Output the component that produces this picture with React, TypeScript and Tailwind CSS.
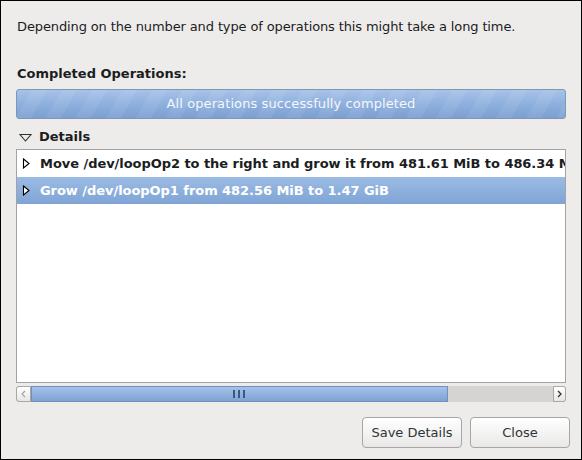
import React from 'react';

const rows = [
  { text: 'Move /dev/loopOp2 to the right and grow it from 481.61 MiB to 486.34 MiB', selected: false },
  { text: 'Grow /dev/loopOp1 from 482.56 MiB to 1.47 GiB', selected: true },
];

function Expander({ open }: { open?: boolean }) {
  if (open) {
    return (
      <svg width="13" height="9" viewBox="0 0 13 9" className="shrink-0">
        <path d="M1 1.5 H12 L6.5 8 Z" fill="none" stroke="#2e3436" strokeWidth="1.1" />
      </svg>
    );
  }
  return (
    <svg width="8" height="11" viewBox="0 0 8 11" className="shrink-0">
      <path d="M1.5 1 L7 5.5 L1.5 10 Z" fill="#ffffff" stroke="#000" strokeWidth="1.1" />
    </svg>
  );
}

export default function App() {
  return (
    <div className="w-[582px] h-[460px] bg-[#edeceb] border border-black flex flex-col text-[13px] text-[#1b1d1e] font-['DejaVu_Sans',sans-serif] overflow-hidden">
      {/* message */}
      <div className="h-[16px] mt-[18px] px-[16px] leading-[16px] tracking-[-0.12px]">
        Depending on the number and type of operations this might take a long time.
      </div>

      <div className="h-[16px] mt-[31px] px-[16px] leading-[16px] font-bold">Completed Operations:</div>

      {/* progress bar */}
      <div className="mx-[15px] mt-[7px] h-[30px] rounded-[3px] border border-[#7f97b7] bg-[repeating-linear-gradient(120deg,rgba(255,255,255,0)_0px,rgba(255,255,255,0)_13px,rgba(255,255,255,0.07)_13px,rgba(255,255,255,0.07)_26px),linear-gradient(to_bottom,#a6c3e8,#8eb0de_50%,#7b9fd1)] flex items-center justify-center text-[#f4f7fb] tracking-[0.1px]">
        All operations successfully completed
      </div>

      {/* details expander */}
      <div className="h-[16px] mt-[10px] px-[18px] flex items-center gap-[7px] font-bold leading-[16px]">
        <Expander open />
        <span>Details</span>
      </div>

      {/* list */}
      <div className="mx-[15px] mt-[4px] h-[234px] border border-[#a3a3a3] bg-white overflow-hidden">
        {rows.map((r) => (
          <div
            key={r.text}
            className={
              r.selected
                ? 'h-[27px] flex items-center gap-[10px] pl-[5px] font-bold whitespace-nowrap tracking-[-0.05px] text-white bg-[linear-gradient(to_bottom,#9bbbe4,#7fa4d5)]'
                : 'h-[27px] flex items-center gap-[10px] pl-[5px] font-bold whitespace-nowrap tracking-[-0.05px]'
            }
          >
            <Expander />
            <span>{r.text}</span>
          </div>
        ))}
      </div>

      {/* horizontal scrollbar */}
      <div className="mx-[15px] mt-[3px] h-[16px] flex rounded-[3px] bg-[#d5d4d2]">
        <div className="w-[15px] h-full rounded-l-[3px] border border-[#a8a8a8] bg-[linear-gradient(to_bottom,#ffffff,#e6e6e5)] flex items-center justify-center">
          <svg width="5" height="8" viewBox="0 0 5 8">
            <path d="M4 1 L1 4 L4 7" fill="none" stroke="#a5a5a5" strokeWidth="1.2" />
          </svg>
        </div>
        <div className="w-[417px] h-full border border-[#6f8fbe] bg-[linear-gradient(to_bottom,#a5c2e8,#7fa3d4)] flex items-center justify-center">
          <div className="flex gap-[3px] ml-[-2px]">
            <div className="w-[2px] h-[8px] bg-[#3c5780]" />
            <div className="w-[2px] h-[8px] bg-[#3c5780]" />
            <div className="w-[2px] h-[8px] bg-[#3c5780]" />
          </div>
        </div>
        <div className="flex-1" />
        <div className="w-[13px] h-full rounded-r-[3px] border border-[#a8a8a8] bg-[linear-gradient(to_bottom,#ffffff,#e6e6e5)] flex items-center justify-center">
          <svg width="5" height="8" viewBox="0 0 5 8">
            <path d="M1 1 L4 4 L1 7" fill="none" stroke="#2e3436" strokeWidth="1.3" />
          </svg>
        </div>
      </div>

      {/* buttons */}
      <div className="mt-[15px] pr-[11px] flex justify-end gap-[8px]">
        <button className="w-[100px] h-[31px] rounded-[4px] border border-[#a6a6a6] bg-[linear-gradient(to_bottom,#ffffff,#e9e8e7)] text-[#2e3436]">
          Save Details
        </button>
        <button className="w-[100px] h-[31px] rounded-[4px] border border-[#a6a6a6] bg-[linear-gradient(to_bottom,#ffffff,#e9e8e7)] text-[#2e3436]">
          Close
        </button>
      </div>
    </div>
  );
}
